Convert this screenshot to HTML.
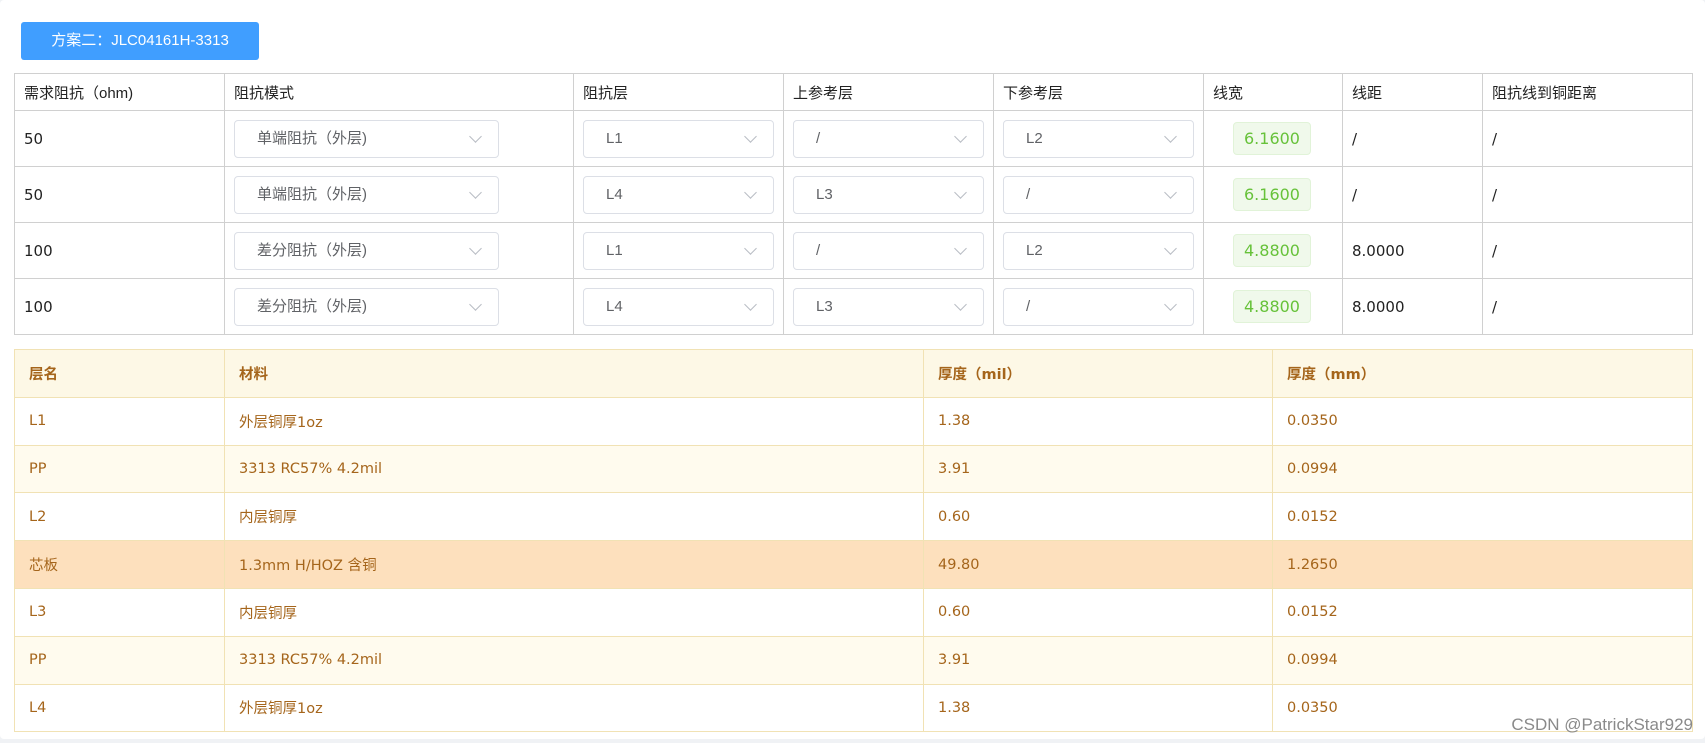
<!DOCTYPE html>
<html><head><meta charset="utf-8"><style>
*{box-sizing:border-box;margin:0;padding:0}
body{width:1705px;height:743px;background:#f0f2f5;font-family:"Liberation Sans","Noto Sans CJK SC",sans-serif;position:relative;overflow:hidden}
.card{position:absolute;left:0;top:0;width:1705px;height:739px;background:#fff;border-radius:4px}
.btn{position:absolute;left:21px;top:22px;width:238px;height:38px;background:#409eff;color:#fff;border-radius:3px;font-size:15px;line-height:38px;text-align:center}
table{border-collapse:collapse;position:absolute;left:14px;table-layout:fixed}
#t1{top:73px;width:1678px}
#t1 td{border:1px solid #d0d0d0;font-size:15px;color:#222;padding:0 9px;vertical-align:middle}
#t1 tr.h td{height:37px}
#t1 tr.r td{height:56px}
.sel{border:1px solid #dcdfe6;border-radius:4px;height:38px;line-height:36px;padding-left:22px;color:#606266;font-size:15px;position:relative;width:100%}
.sel:after{content:"";position:absolute;right:18px;top:11px;width:8px;height:8px;border-right:1px solid #b8bcc4;border-bottom:1px solid #b8bcc4;transform:rotate(45deg)}
.tag{display:inline-block;margin-left:20px;background:#f0f9eb;border:1px solid #e1f3d8;color:#67c23a;border-radius:4px;height:33px;line-height:31px;padding:0 10px;font-family:"DejaVu Sans",sans-serif;font-size:16px}
.mono{font-family:"DejaVu Sans",sans-serif;font-size:16px}
#t2{top:349px;width:1678px}
#t2 td{border:1px solid #f1e2b4;color:#a5651b;font-family:"DejaVu Sans","Noto Sans CJK SC",sans-serif;font-size:14.5px;padding:0 14px;height:47.8px}
#t2 tr.h td{background:#fdf8e6;font-weight:bold}
#t2 tr.a td{background:#fffbee}
#t2 tr.c td{background:#fde0bd}
.wm{position:absolute;right:12px;top:715px;color:#8a8a8a;font-size:17px;font-family:"Liberation Sans",sans-serif}
</style></head><body>
<div class="card">
<div class="btn">方案二：JLC04161H-3313</div>
<table id="t1">
<colgroup><col style="width:210px"><col style="width:349px"><col style="width:210px"><col style="width:210px"><col style="width:210px"><col style="width:139px"><col style="width:140px"><col style="width:210px"></colgroup>
<tr class="h"><td>需求阻抗（ohm)</td><td>阻抗模式</td><td>阻抗层</td><td>上参考层</td><td>下参考层</td><td>线宽</td><td>线距</td><td>阻抗线到铜距离</td></tr>
<tr class="r"><td class="mono">50</td><td><div class="sel" style="width:265px">单端阻抗（外层)</div></td><td><div class="sel">L1</div></td><td><div class="sel">/</div></td><td><div class="sel">L2</div></td><td><span class="tag">6.1600</span></td><td class="mono">/</td><td class="mono">/</td></tr>
<tr class="r"><td class="mono">50</td><td><div class="sel" style="width:265px">单端阻抗（外层)</div></td><td><div class="sel">L4</div></td><td><div class="sel">L3</div></td><td><div class="sel">/</div></td><td><span class="tag">6.1600</span></td><td class="mono">/</td><td class="mono">/</td></tr>
<tr class="r"><td class="mono">100</td><td><div class="sel" style="width:265px">差分阻抗（外层)</div></td><td><div class="sel">L1</div></td><td><div class="sel">/</div></td><td><div class="sel">L2</div></td><td><span class="tag">4.8800</span></td><td class="mono">8.0000</td><td class="mono">/</td></tr>
<tr class="r"><td class="mono">100</td><td><div class="sel" style="width:265px">差分阻抗（外层)</div></td><td><div class="sel">L4</div></td><td><div class="sel">L3</div></td><td><div class="sel">/</div></td><td><span class="tag">4.8800</span></td><td class="mono">8.0000</td><td class="mono">/</td></tr>
</table>
<table id="t2">
<colgroup><col style="width:210px"><col style="width:699px"><col style="width:349px"><col style="width:420px"></colgroup>
<tr class="h"><td>层名</td><td>材料</td><td>厚度（mil）</td><td>厚度（mm）</td></tr>
<tr><td>L1</td><td>外层铜厚1oz</td><td>1.38</td><td>0.0350</td></tr>
<tr class="a"><td>PP</td><td>3313 RC57% 4.2mil</td><td>3.91</td><td>0.0994</td></tr>
<tr><td>L2</td><td>内层铜厚</td><td>0.60</td><td>0.0152</td></tr>
<tr class="c"><td>芯板</td><td>1.3mm H/HOZ 含铜</td><td>49.80</td><td>1.2650</td></tr>
<tr><td>L3</td><td>内层铜厚</td><td>0.60</td><td>0.0152</td></tr>
<tr class="a"><td>PP</td><td>3313 RC57% 4.2mil</td><td>3.91</td><td>0.0994</td></tr>
<tr><td>L4</td><td>外层铜厚1oz</td><td>1.38</td><td>0.0350</td></tr>
</table>
<div class="wm">CSDN @PatrickStar929</div>
</div>
</body></html>
